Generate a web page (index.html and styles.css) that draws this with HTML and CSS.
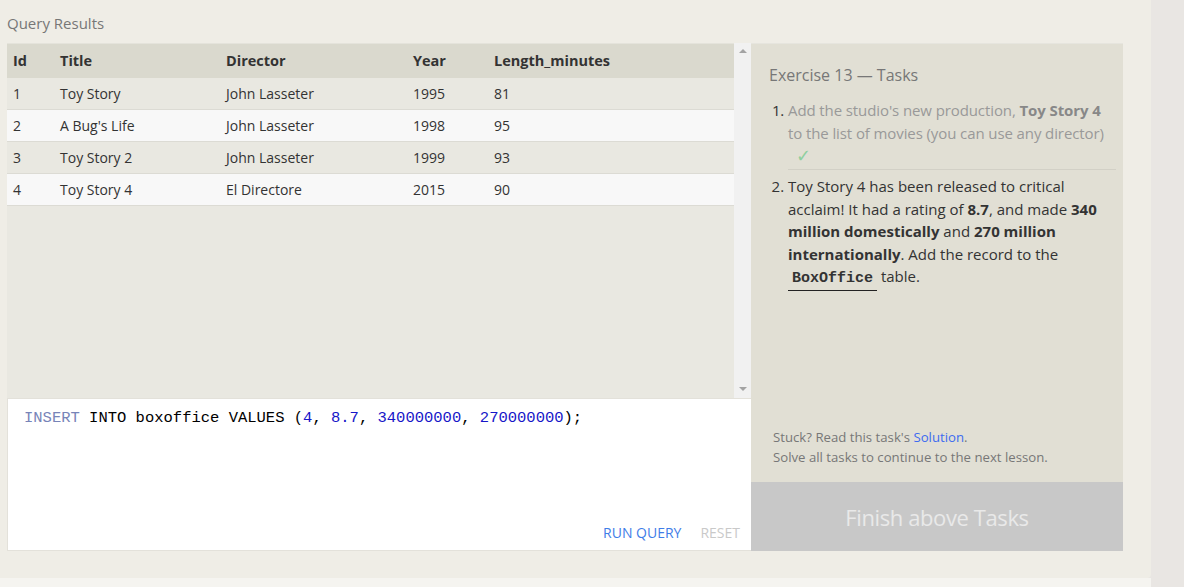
FILE: index.html
```html
<!DOCTYPE html>
<html>
<head>
<meta charset="utf-8">
<link rel="stylesheet" href="styles.css">
</head>
<body>
<div class="shell">
  <div class="page">
    <div class="title">Query Results</div>
    <div class="main">
      <div class="left">
        <div class="results">
          <div class="table-wrap">
            <table class="grid">
              <thead>
                <tr><th class="c-id">Id</th><th class="c-title">Title</th><th class="c-dir">Director</th><th class="c-year">Year</th><th>Length_minutes</th></tr>
              </thead>
              <tbody>
                <tr class="odd"><td>1</td><td>Toy Story</td><td>John Lasseter</td><td>1995</td><td>81</td></tr>
                <tr class="even"><td>2</td><td>A Bug's Life</td><td>John Lasseter</td><td>1998</td><td>95</td></tr>
                <tr class="odd"><td>3</td><td>Toy Story 2</td><td>John Lasseter</td><td>1999</td><td>93</td></tr>
                <tr class="even"><td>4</td><td>Toy Story 4</td><td>El Directore</td><td>2015</td><td>90</td></tr>
              </tbody>
            </table>
          </div>
          <div class="scrollbar">
            <span class="arrow up"></span>
            <span class="arrow down"></span>
          </div>
        </div>
        <div class="editor">
          <div class="code"><span class="kw">INSERT</span> INTO boxoffice VALUES (<span class="num">4</span>, <span class="num">8.7</span>, <span class="num">340000000</span>, <span class="num">270000000</span>);</div>
          <div class="actions">
            <span class="run">RUN QUERY</span>
            <span class="reset">RESET</span>
          </div>
        </div>
      </div>
      <div class="panel">
        <div class="panel-body">
          <h3 class="ex-title">Exercise 13 — Tasks</h3>
          <ol class="tasks">
            <li class="done">Add the studio's new production, <b>Toy Story 4</b> to the list of movies (you can use any director)<span class="check">✓</span></li>
            <li class="open">Toy Story 4 has been released to critical acclaim! It had a rating of <b>8.7</b>, and made <b>340 million domestically</b> and <b>270 million internationally</b>. Add the record to the <code>BoxOffice</code> table.</li>
          </ol>
        </div>
        <div class="help">
          <div>Stuck? Read this task's <span class="link">Solution</span>.</div>
          <div>Solve all tasks to continue to the next lesson.</div>
        </div>
        <div class="finish">Finish above Tasks</div>
      </div>
    </div>
  </div>
  <div class="footer"></div>
</div>
</body>
</html>
```

FILE: styles.css
```css
* { box-sizing: border-box; }
html, body { margin: 0; padding: 0; }
body {
  background: #e9e6e3;
  font-family: "Open Sans", "Noto Sans", sans-serif;
  color: #333;
  width: 1184px;
  height: 587px;
  overflow: hidden;
}
.shell { width: 1151px; }
.page {
  background: #efede6;
  height: 578px;
  padding: 13px 0 0 7px;
  border-bottom-right-radius: 4px;
}
.footer { height: 9px; background: #f5f4f0; }
.title {
  font-size: 15px;
  color: #777;
  height: 30px;
  line-height: 20px;
}
.main { display: flex; }
.left { width: 744px; display: flex; flex-direction: column; }
.results {
  height: 355px;
  display: flex;
}
.table-wrap { width: 727px; background: #e9e8e1; }
.grid {
  width: 100%;
  border-collapse: collapse;
  font-size: 14px;
}
.grid th {
  background: #dad9ce;
  text-align: left;
  font-weight: 700;
  font-size: 14.5px;
  height: 34px;
  padding: 0 6px;
  color: #333;
  border-top: 1px solid #e4e3db;
}
.grid .c-id { width: 47px; }
.grid .c-title { width: 166px; }
.grid .c-dir { width: 187px; }
.grid .c-year { width: 81px; }
.grid td {
  height: 32px;
  padding: 0 6px;
  border-bottom: 1px solid #dcdbd4;
  color: #333;
}
.grid tr.odd td { background: #e9e8e1; }
.grid tr.even td { background: #f8f8f8; }
.scrollbar {
  width: 17px;
  background: #f1f1f1;
  display: flex;
  flex-direction: column;
  justify-content: space-between;
  align-items: center;
  padding: 6px 0 7px;
}
.arrow { width: 0; height: 0; border-left: 4px solid transparent; border-right: 4px solid transparent; }
.arrow.up { border-bottom: 4px solid #a3a3a3; }
.arrow.down { border-top: 4px solid #a3a3a3; }
.editor {
  height: 153px;
  background: #fff;
  border: 1px solid #e3e1da;
  border-right: 0;
  display: flex;
  flex-direction: column;
  justify-content: space-between;
  padding: 9px 11px 8px 16px;
}
.code {
  font-family: "Liberation Mono", "DejaVu Sans Mono", monospace;
  font-size: 15.5px;
  color: #000;
  line-height: 20px;
  white-space: pre;
}
.code .kw { color: #7784b8; }
.code .num { color: #1616c8; }
.actions {
  display: flex;
  justify-content: flex-end;
  gap: 19px;
  font-size: 14px;
}
.run { color: #3f7de8; }
.reset { color: #c9c9c9; }
.panel {
  width: 372px;
  background: #e1dfd4;
  display: flex;
  flex-direction: column;
  border-top: 1px solid #e6e5de;
}
.panel-body { flex: 1; padding: 20px 7px 0 18px; }
.ex-title {
  margin: 0 0 13px;
  font-weight: 400;
  font-size: 16px;
  color: #777;
}
.tasks {
  margin: 0;
  padding: 0 0 0 19px;
  font-size: 15px;
  line-height: 22.5px;
  color: #333;
}
.tasks li::marker { color: #333; }
.tasks li.done {
  color: #999;
  letter-spacing: -0.1px;
  border-bottom: 1px solid #d2d0c6;
  padding: 0 6px 3px 0;
  margin-bottom: 5px;
}
.tasks li.done b { color: #888; }
.tasks li.open { width: 320px; }
.check {
  display: block;
  color: #8fcf9f;
  padding-left: 8px;
  font-size: 18px;
  line-height: 22px;
}
.tasks code {
  font-family: "Liberation Mono", "DejaVu Sans Mono", monospace;
  font-weight: 700;
  font-size: 15px;
  display: inline-block;
  padding: 0 4px;
  border-bottom: 1.5px solid #222;
  line-height: 22px;
}
.help {
  padding: 0 14px 15px 22px;
  font-size: 13.2px;
  line-height: 20px;
  color: #777;
}
.link { color: #3d6bf0; }
.finish {
  height: 69px;
  background: #c8c8c8;
  color: #e9e9e9;
  font-size: 22px;
  display: flex;
  align-items: center;
  justify-content: center;
  letter-spacing: -0.4px;
}
```
